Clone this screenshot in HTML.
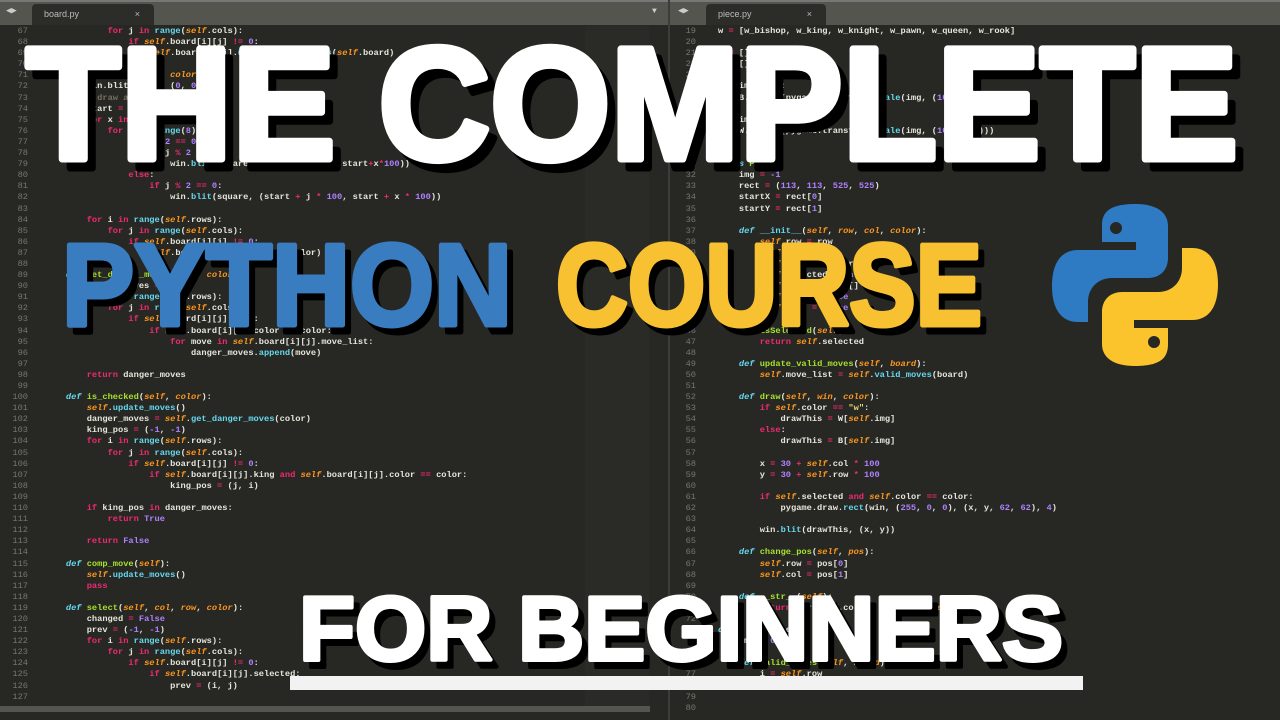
<!DOCTYPE html>
<html><head><meta charset="utf-8"><style>
*{margin:0;padding:0;box-sizing:border-box}
body{width:1280px;height:720px;overflow:hidden;background:#272723;position:relative;font-family:"Liberation Mono",monospace}
.tabbar{position:absolute;top:0;height:25px;background:#55554f;border-top:2px solid #777}
.tab{position:absolute;top:4px;height:21px;background:#2c2c28;border-radius:4px 4px 0 0;color:#bbb;font:9px "Liberation Sans",sans-serif;padding:5px 0 0 12px}
.code{position:absolute;top:26px;font-size:8.7px;line-height:11.1px;color:#e6e6dc;white-space:pre;font-weight:bold}
.ln{position:absolute;top:26px;font-size:8.7px;line-height:11.1px;color:#77776f;white-space:pre;text-align:right}
.k{color:#f02a72}.s{color:#fd971f;font-style:italic}.f{color:#66d9ef}.n{color:#ae81ff}.d{color:#66d9ef;font-style:italic}.g{color:#a6e22e}
.mini{position:absolute;left:585px;top:26px;width:64px;height:680px;background:#2a2a26}
svg{position:absolute;left:0;top:0}
</style></head><body>
<div class="tabbar" style="left:0;width:668px"><span style="position:absolute;left:6px;top:4px;color:#ccc;font-size:9px">◀▶</span><span style="position:absolute;left:652px;top:5px;color:#ccc;font-size:8px">▼</span></div>
<div class="tab" style="left:32px;width:122px">board.py<span style="position:absolute;right:14px">×</span></div>
<div class="tabbar" style="left:670px;width:610px"><span style="position:absolute;left:8px;top:4px;color:#ccc;font-size:9px">◀▶</span></div>
<div class="tab" style="left:706px;width:120px">piece.py<span style="position:absolute;right:14px">×</span></div>
<div style="position:absolute;left:668px;top:0;width:2px;height:720px;background:#3c3c38"></div>
<div class="mini"></div>
<div style="position:absolute;left:0;top:706px;width:650px;height:6px;background:#55554f"></div>
<div class="ln" style="left:4px;width:24px">67
68
69
70
71
72
73
74
75
76
77
78
79
80
81
82
83
84
85
86
87
88
89
90
91
92
93
94
95
96
97
98
99
100
101
102
103
104
105
106
107
108
109
110
111
112
113
114
115
116
117
118
119
120
121
122
123
124
125
126
127</div>
<div class="code" style="left:45px">            <span class="k">for</span> j <span class="k">in</span> <span class="f">range</span>(<span class="s">self</span>.cols):
                <span class="k">if</span> <span class="s">self</span>.board[i][j] <span class="k">!=</span> <span class="n">0</span>:
                    <span class="s">self</span>.board[i][j].<span class="f">update_valid_moves</span>(<span class="s">self</span>.board)

    <span class="d">def</span> <span class="g">draw</span>(<span class="s">self</span>, <span class="s">win</span>, <span class="s">color</span>):
        win.blit(board, (<span class="n">0</span>, <span class="n">0</span>))
        <span style="color:#75715e"># draw all squares on board</span>
        start <span class="k">=</span> <span class="n">100</span>
        <span class="k">for</span> x <span class="k">in</span> <span class="f">range</span>(<span class="n">8</span>):
            <span class="k">for</span> j <span class="k">in</span> <span class="f">range</span>(<span class="n">8</span>):
                <span class="k">if</span> x <span class="k">%</span> <span class="n">2</span> <span class="k">==</span> <span class="n">0</span>:
                    <span class="k">if</span> j <span class="k">%</span> <span class="n">2</span> <span class="k">==</span> <span class="n">1</span>:
                        win.<span class="f">blit</span>(square, (start <span class="k">+</span> j<span class="k">*</span><span class="n">100</span>, start<span class="k">+</span>x<span class="k">*</span><span class="n">100</span>))
                <span class="k">else</span>:
                    <span class="k">if</span> j <span class="k">%</span> <span class="n">2</span> <span class="k">==</span> <span class="n">0</span>:
                        win.<span class="f">blit</span>(square, (start <span class="k">+</span> j <span class="k">*</span> <span class="n">100</span>, start <span class="k">+</span> x <span class="k">*</span> <span class="n">100</span>))

        <span class="k">for</span> i <span class="k">in</span> <span class="f">range</span>(<span class="s">self</span>.rows):
            <span class="k">for</span> j <span class="k">in</span> <span class="f">range</span>(<span class="s">self</span>.cols):
                <span class="k">if</span> <span class="s">self</span>.board[i][j] <span class="k">!=</span> <span class="n">0</span>:
                    <span class="s">self</span>.board[i][j].<span class="f">draw</span>(win, color)

    <span class="d">def</span> <span class="g">get_danger_moves</span>(<span class="s">self</span>, <span class="s">color</span>):
        danger_moves <span class="k">=</span> []
        <span class="k">for</span> i <span class="k">in</span> <span class="f">range</span>(<span class="s">self</span>.rows):
            <span class="k">for</span> j <span class="k">in</span> <span class="f">range</span>(<span class="s">self</span>.cols):
                <span class="k">if</span> <span class="s">self</span>.board[i][j] <span class="k">!=</span> <span class="n">0</span>:
                    <span class="k">if</span> <span class="s">self</span>.board[i][j].color <span class="k">!=</span> color:
                        <span class="k">for</span> move <span class="k">in</span> <span class="s">self</span>.board[i][j].move_list:
                            danger_moves.<span class="f">append</span>(move)

        <span class="k">return</span> danger_moves

    <span class="d">def</span> <span class="g">is_checked</span>(<span class="s">self</span>, <span class="s">color</span>):
        <span class="s">self</span>.<span class="f">update_moves</span>()
        danger_moves <span class="k">=</span> <span class="s">self</span>.<span class="f">get_danger_moves</span>(color)
        king_pos <span class="k">=</span> (<span class="n">-1</span>, <span class="n">-1</span>)
        <span class="k">for</span> i <span class="k">in</span> <span class="f">range</span>(<span class="s">self</span>.rows):
            <span class="k">for</span> j <span class="k">in</span> <span class="f">range</span>(<span class="s">self</span>.cols):
                <span class="k">if</span> <span class="s">self</span>.board[i][j] <span class="k">!=</span> <span class="n">0</span>:
                    <span class="k">if</span> <span class="s">self</span>.board[i][j].king <span class="k">and</span> <span class="s">self</span>.board[i][j].color <span class="k">==</span> color:
                        king_pos <span class="k">=</span> (j, i)

        <span class="k">if</span> king_pos <span class="k">in</span> danger_moves:
            <span class="k">return</span> <span class="n">True</span>

        <span class="k">return</span> <span class="n">False</span>

    <span class="d">def</span> <span class="g">comp_move</span>(<span class="s">self</span>):
        <span class="s">self</span>.<span class="f">update_moves</span>()
        <span class="k">pass</span>

    <span class="d">def</span> <span class="g">select</span>(<span class="s">self</span>, <span class="s">col</span>, <span class="s">row</span>, <span class="s">color</span>):
        changed <span class="k">=</span> <span class="n">False</span>
        prev <span class="k">=</span> (<span class="n">-1</span>, <span class="n">-1</span>)
        <span class="k">for</span> i <span class="k">in</span> <span class="f">range</span>(<span class="s">self</span>.rows):
            <span class="k">for</span> j <span class="k">in</span> <span class="f">range</span>(<span class="s">self</span>.cols):
                <span class="k">if</span> <span class="s">self</span>.board[i][j] <span class="k">!=</span> <span class="n">0</span>:
                    <span class="k">if</span> <span class="s">self</span>.board[i][j].selected:
                        prev <span class="k">=</span> (i, j)
</div>
<div class="ln" style="left:672px;width:24px">19
20
21
22
23
24
25
26
27
28
29
30
31
32
33
34
35
36
37
38
39
40
41
42
43
44
45
46
47
48
49
50
51
52
53
54
55
56
57
58
59
60
61
62
63
64
65
66
67
68
69
70
71
72
73
74
75
76
77
78
79
80</div>
<div class="code" style="left:718px">w <span class="k">=</span> [w_bishop, w_king, w_knight, w_pawn, w_queen, w_rook]

B <span class="k">=</span> []
W <span class="k">=</span> []

<span class="k">for</span> img <span class="k">in</span> b:
    B.<span class="f">append</span>(pygame.transform.<span class="f">scale</span>(img, (<span class="n">100</span>, <span class="n">100</span>)))

<span class="k">for</span> img <span class="k">in</span> w:
    W.<span class="f">append</span>(pygame.transform.<span class="f">scale</span>(img, (<span class="n">100</span>, <span class="n">100</span>)))


<span class="d">class</span> <span class="g">Piece</span>:
    img <span class="k">=</span> <span class="n">-1</span>
    rect <span class="k">=</span> (<span class="n">113</span>, <span class="n">113</span>, <span class="n">525</span>, <span class="n">525</span>)
    startX <span class="k">=</span> rect[<span class="n">0</span>]
    startY <span class="k">=</span> rect[<span class="n">1</span>]

    <span class="d">def</span> <span class="f">__init__</span>(<span class="s">self</span>, <span class="s">row</span>, <span class="s">col</span>, <span class="s">color</span>):
        <span class="s">self</span>.row <span class="k">=</span> row
        <span class="s">self</span>.col <span class="k">=</span> col
        <span class="s">self</span>.color <span class="k">=</span> color
        <span class="s">self</span>.selected <span class="k">=</span> <span class="n">False</span>
        <span class="s">self</span>.move_list <span class="k">=</span> []
        <span class="s">self</span>.king <span class="k">=</span> <span class="n">False</span>
        <span class="s">self</span>.pawn <span class="k">=</span> <span class="n">False</span>

    <span class="d">def</span> <span class="g">isSelected</span>(<span class="s">self</span>):
        <span class="k">return</span> <span class="s">self</span>.selected

    <span class="d">def</span> <span class="g">update_valid_moves</span>(<span class="s">self</span>, <span class="s">board</span>):
        <span class="s">self</span>.move_list <span class="k">=</span> <span class="s">self</span>.<span class="f">valid_moves</span>(board)

    <span class="d">def</span> <span class="g">draw</span>(<span class="s">self</span>, <span class="s">win</span>, <span class="s">color</span>):
        <span class="k">if</span> <span class="s">self</span>.color <span class="k">==</span> <span style="color:#e6db74">"w"</span>:
            drawThis <span class="k">=</span> W[<span class="s">self</span>.img]
        <span class="k">else</span>:
            drawThis <span class="k">=</span> B[<span class="s">self</span>.img]

        x <span class="k">=</span> <span class="n">30</span> <span class="k">+</span> <span class="s">self</span>.col <span class="k">*</span> <span class="n">100</span>
        y <span class="k">=</span> <span class="n">30</span> <span class="k">+</span> <span class="s">self</span>.row <span class="k">*</span> <span class="n">100</span>

        <span class="k">if</span> <span class="s">self</span>.selected <span class="k">and</span> <span class="s">self</span>.color <span class="k">==</span> color:
            pygame.draw.<span class="f">rect</span>(win, (<span class="n">255</span>, <span class="n">0</span>, <span class="n">0</span>), (x, y, <span class="n">62</span>, <span class="n">62</span>), <span class="n">4</span>)

        win.<span class="f">blit</span>(drawThis, (x, y))

    <span class="d">def</span> <span class="g">change_pos</span>(<span class="s">self</span>, <span class="s">pos</span>):
        <span class="s">self</span>.row <span class="k">=</span> pos[<span class="n">0</span>]
        <span class="s">self</span>.col <span class="k">=</span> pos[<span class="n">1</span>]

    <span class="d">def</span> <span class="g">__str__</span>(<span class="s">self</span>):
        <span class="k">return</span> <span class="f">str</span>(<span class="s">self</span>.col) <span class="k">+</span> <span style="color:#e6db74">" "</span> <span class="k">+</span> <span class="f">str</span>(<span class="s">self</span>.row)

<span class="d">class</span> <span class="g">Pawn</span>(Piece):
    img <span class="k">=</span> <span class="n">0</span>

    <span class="d">def</span> <span class="g">valid_moves</span>(<span class="s">self</span>, <span class="s">board</span>):
        i <span class="k">=</span> <span class="s">self</span>.row
        j <span class="k">=</span> <span class="s">self</span>.col</div>

<svg width="1280" height="720" viewBox="0 0 1280 720">
 <g font-family="Liberation Sans, sans-serif" font-weight="bold" stroke-linejoin="round">
  <text x="34" y="168" font-size="160" fill="#000" stroke="#000" stroke-width="7" textLength="1212" lengthAdjust="spacingAndGlyphs">THE COMPLETE</text>
  <text x="26" y="159" font-size="160" fill="#fff" stroke="#fff" stroke-width="7" textLength="1212" lengthAdjust="spacingAndGlyphs">THE COMPLETE</text>
  <text x="68" y="332" font-size="116" fill="#000" stroke="#000" stroke-width="5" textLength="450" lengthAdjust="spacingAndGlyphs">PYTHON</text>
  <text x="62" y="325" font-size="116" fill="#3a7cc0" stroke="#3a7cc0" stroke-width="5" textLength="450" lengthAdjust="spacingAndGlyphs">PYTHON</text>
  <text x="562" y="332" font-size="116" fill="#000" stroke="#000" stroke-width="5" textLength="426" lengthAdjust="spacingAndGlyphs">COURSE</text>
  <text x="556" y="325" font-size="116" fill="#f7c132" stroke="#f7c132" stroke-width="5" textLength="426" lengthAdjust="spacingAndGlyphs">COURSE</text>
  <text x="305" y="667" font-size="91" fill="#000" stroke="#000" stroke-width="4" textLength="764" lengthAdjust="spacingAndGlyphs">FOR BEGINNERS</text>
  <text x="299" y="660" font-size="91" fill="#fff" stroke="#fff" stroke-width="4" textLength="764" lengthAdjust="spacingAndGlyphs">FOR BEGINNERS</text>
 </g>
 <rect x="290" y="676" width="793" height="14" fill="#f2f2f2"/>
 <g transform="translate(1052,204)">
  <path d="M83 0 C55 0 50 10 50 22 V38 H84 V46 H26 C10 46 0 58 0 82 C0 106 10 118 26 118 H36 V98 C36 84 46 74 60 74 H96 C108 74 116 66 116 54 V22 C116 8 104 0 83 0 Z" fill="#2e7bc4"/>
  <circle cx="64" cy="24" r="6" fill="#272723"/>
  <path d="M83 162 C111 162 116 152 116 140 V124 H82 V116 H140 C156 116 166 104 166 80 C166 56 156 44 140 44 H130 V64 C130 78 120 88 106 88 H70 C58 88 50 96 50 108 V140 C50 154 62 162 83 162 Z" fill="#fcc42c"/>
  <circle cx="102" cy="138" r="6" fill="#272723"/>
 </g>
</svg>
</body></html>
